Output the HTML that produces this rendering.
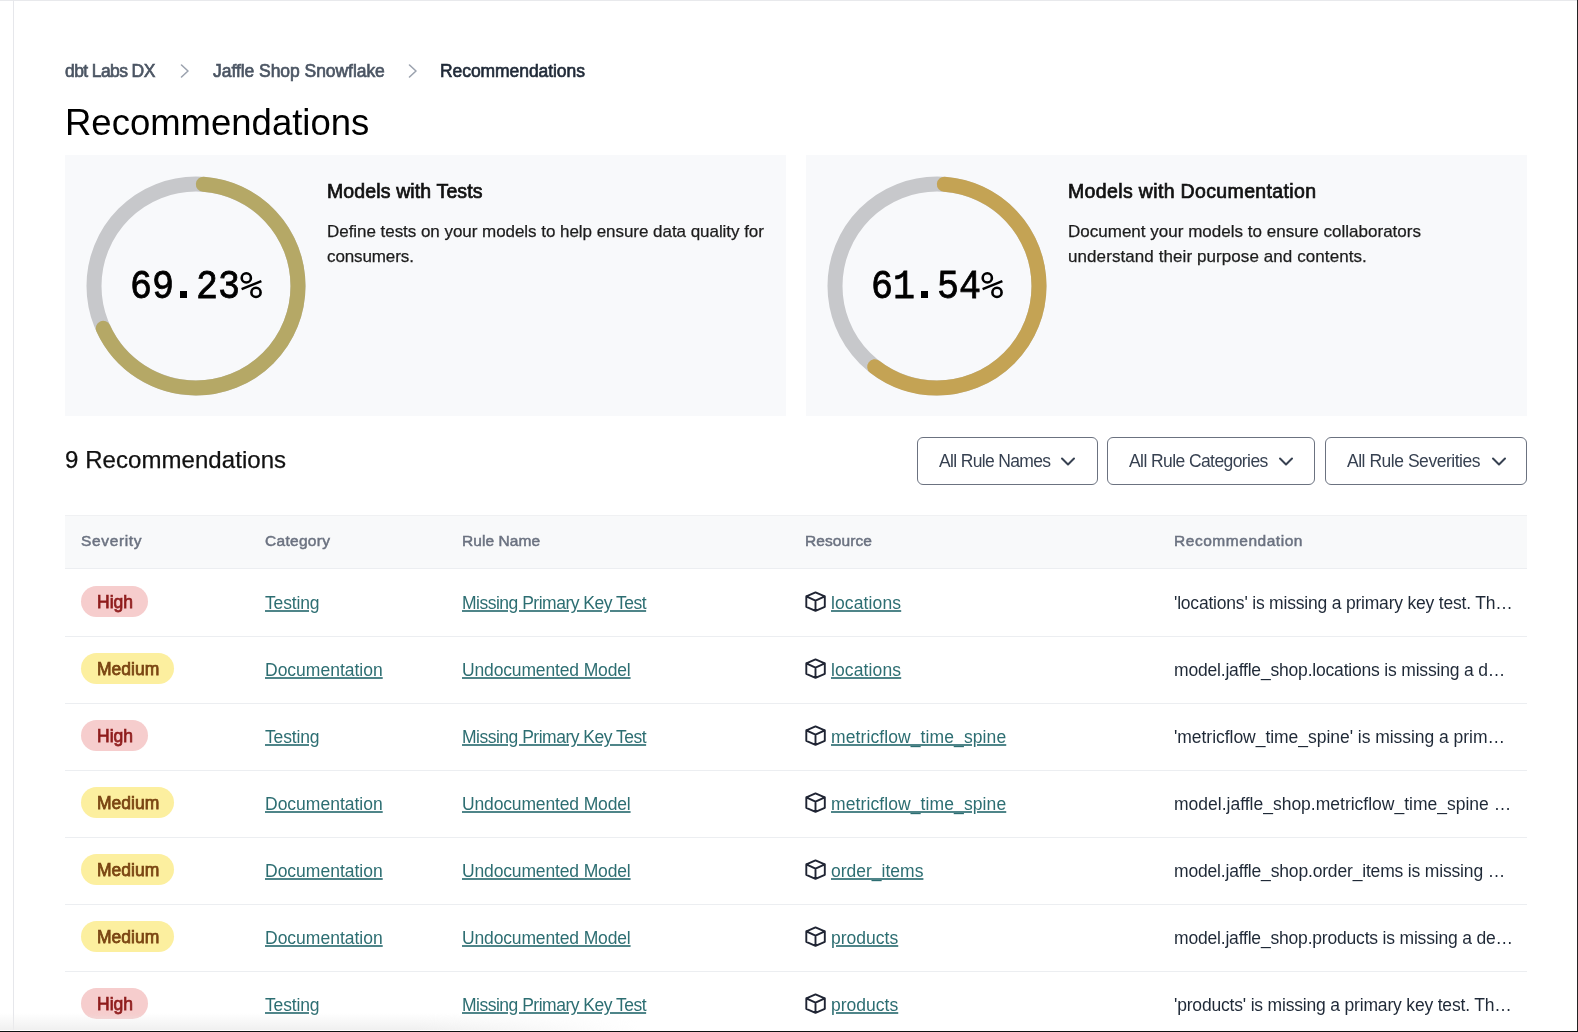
<!DOCTYPE html>
<html><head><meta charset="utf-8">
<style>
html,body{margin:0;padding:0;}
body{width:1578px;height:1032px;position:relative;overflow:hidden;background:#fff;font-family:"Liberation Sans",sans-serif;}
.a{position:absolute;white-space:nowrap;line-height:1;will-change:transform;}
.card{position:absolute;top:155px;width:721px;height:261px;background:#f8f9fb;}
.btn{position:absolute;top:437px;height:48px;box-sizing:border-box;border:1px solid #6b7280;border-radius:6px;background:#fff;}
.badge{position:absolute;height:31px;border-radius:16px;}
.lnk{text-decoration:underline;text-decoration-color:#4f8589;text-decoration-thickness:1.5px;text-underline-offset:1px;}
</style></head><body>
<div style="position:absolute;left:0;top:0;width:1578px;height:1px;background:#e8e9ec"></div>
<div style="position:absolute;left:13px;top:0;width:1px;height:1032px;background:#e6e7eb"></div>
<div class="a" style="left:65px;top:63px;font-size:17.5px;letter-spacing:-0.6px;color:#4b5563;-webkit-text-stroke:0.65px #4b5563;">dbt Labs DX</div>
<svg class="a" style="left:179px;top:63px" width="12" height="16" viewBox="0 0 12 16"><path d="M2.5 2 L9 8 L2.5 14" fill="none" stroke="#9ca3af" stroke-width="1.6" stroke-linecap="round" stroke-linejoin="round"/></svg>
<div class="a" style="left:213px;top:63px;font-size:17.5px;letter-spacing:-0.05px;color:#4b5563;-webkit-text-stroke:0.65px #4b5563;">Jaffle Shop Snowflake</div>
<svg class="a" style="left:407px;top:63px" width="12" height="16" viewBox="0 0 12 16"><path d="M2.5 2 L9 8 L2.5 14" fill="none" stroke="#9ca3af" stroke-width="1.6" stroke-linecap="round" stroke-linejoin="round"/></svg>
<div class="a" style="left:440px;top:63px;font-size:17.5px;letter-spacing:-0.071px;color:#1f2937;-webkit-text-stroke:0.65px #1f2937;">Recommendations</div>
<div class="a" style="left:64.5px;top:105px;font-size:36.5px;color:#000;">Recommendations</div>
<div class="card" style="left:65px"></div>
<div class="card" style="left:806px"></div>
<svg class="a" style="left:86px;top:176px" width="220" height="220" viewBox="0 0 220 220"><circle cx="110" cy="110" r="102" fill="none" stroke="#c7c8cb" stroke-width="15"/><circle cx="110" cy="110" r="102" fill="none" stroke="#b5a866" stroke-width="15" stroke-linecap="round" stroke-dasharray="428.68 2000" stroke-dashoffset="-7.5" transform="rotate(-90 110 110)"/></svg>
<svg class="a" style="left:827px;top:176px" width="220" height="220" viewBox="0 0 220 220"><circle cx="110" cy="110" r="102" fill="none" stroke="#c7c8cb" stroke-width="15"/><circle cx="110" cy="110" r="102" fill="none" stroke="#c4a354" stroke-width="15" stroke-linecap="round" stroke-dasharray="379.40 2000" stroke-dashoffset="-7.5" transform="rotate(-90 110 110)"/></svg>
<div class="a" style="left:129.7px;top:270px;font-size:36.7px;font-family:'Liberation Mono',monospace;transform:scaleY(1.12);transform-origin:0 80%;-webkit-text-stroke:0.7px #000;color:#000">69 23</div><svg class="a" style="left:238.00px;top:270px" width="28" height="30" viewBox="0 0 28 30"><circle cx="8.3" cy="7.9" r="4.6" fill="none" stroke="#000" stroke-width="2.6"/><circle cx="18" cy="22.4" r="4.6" fill="none" stroke="#000" stroke-width="2.6"/><path d="M3.6 19.2 L23.4 11.1" stroke="#000" stroke-width="2.5" stroke-linecap="butt"/></svg><div class="a" style="left:180.20px;top:290.8px;width:7.3px;height:7px;background:#000"></div>
<div class="a" style="left:870.7px;top:270px;font-size:36.7px;font-family:'Liberation Mono',monospace;transform:scaleY(1.12);transform-origin:0 80%;-webkit-text-stroke:0.7px #000;color:#000">61 54</div><svg class="a" style="left:979.00px;top:270px" width="28" height="30" viewBox="0 0 28 30"><circle cx="8.3" cy="7.9" r="4.6" fill="none" stroke="#000" stroke-width="2.6"/><circle cx="18" cy="22.4" r="4.6" fill="none" stroke="#000" stroke-width="2.6"/><path d="M3.6 19.2 L23.4 11.1" stroke="#000" stroke-width="2.5" stroke-linecap="butt"/></svg><div class="a" style="left:921.20px;top:290.8px;width:7.3px;height:7px;background:#000"></div>
<div class="a" style="left:326.5px;top:182px;font-size:19.5px;letter-spacing:0.125px;color:#111;-webkit-text-stroke:0.7px #111;">Models with Tests</div>
<div class="a" style="left:1067.5px;top:182px;font-size:19.5px;letter-spacing:0.354px;color:#111;-webkit-text-stroke:0.7px #111;">Models with Documentation</div>
<div class="a" style="left:326.5px;top:223px;font-size:17px;letter-spacing:-0.043px;color:#1c1c1c;-webkit-text-stroke:0.25px #1c1c1c;">Define tests on your models to help ensure data quality for</div>
<div class="a" style="left:326.5px;top:248px;font-size:17px;letter-spacing:-0.111px;color:#1c1c1c;-webkit-text-stroke:0.25px #1c1c1c;">consumers.</div>
<div class="a" style="left:1067.5px;top:223px;font-size:17px;letter-spacing:0.012px;color:#1c1c1c;-webkit-text-stroke:0.25px #1c1c1c;">Document your models to ensure collaborators</div>
<div class="a" style="left:1067.5px;top:248px;font-size:17px;letter-spacing:0.081px;color:#1c1c1c;-webkit-text-stroke:0.25px #1c1c1c;">understand their purpose and contents.</div>
<div class="a" style="left:65px;top:448px;font-size:24px;letter-spacing:0.062px;color:#111;-webkit-text-stroke:0.25px #111;">9 Recommendations</div>
<div class="btn" style="left:917px;width:181px"></div>
<div class="a" style="left:938.5px;top:453px;font-size:17.5px;letter-spacing:-0.654px;color:#374151;">All Rule Names</div>
<svg class="a" style="left:1059.5px;top:456px" width="16" height="12" viewBox="0 0 16 12"><path d="M2 2.5 L8 8.5 L14 2.5" fill="none" stroke="#374151" stroke-width="2" stroke-linecap="round" stroke-linejoin="round"/></svg>
<div class="btn" style="left:1107px;width:208px"></div>
<div class="a" style="left:1129px;top:453px;font-size:17.5px;letter-spacing:-0.583px;color:#374151;">All Rule Categories</div>
<svg class="a" style="left:1278px;top:456px" width="16" height="12" viewBox="0 0 16 12"><path d="M2 2.5 L8 8.5 L14 2.5" fill="none" stroke="#374151" stroke-width="2" stroke-linecap="round" stroke-linejoin="round"/></svg>
<div class="btn" style="left:1325px;width:202px"></div>
<div class="a" style="left:1347px;top:453px;font-size:17.5px;letter-spacing:-0.472px;color:#374151;">All Rule Severities</div>
<svg class="a" style="left:1490.5px;top:456px" width="16" height="12" viewBox="0 0 16 12"><path d="M2 2.5 L8 8.5 L14 2.5" fill="none" stroke="#374151" stroke-width="2" stroke-linecap="round" stroke-linejoin="round"/></svg>
<div style="position:absolute;left:65px;top:515px;width:1462px;height:54px;box-sizing:border-box;background:#f8f9fa;border-top:1px solid #f0f1f3;border-bottom:1px solid #eceef1"></div>
<div class="a" style="left:80.5px;top:533px;font-size:15.5px;letter-spacing:0.643px;color:#6b7280;-webkit-text-stroke:0.5px #6b7280;">Severity</div>
<div class="a" style="left:264.5px;top:533px;font-size:15.5px;letter-spacing:0.286px;color:#6b7280;-webkit-text-stroke:0.5px #6b7280;">Category</div>
<div class="a" style="left:462px;top:533px;font-size:15.5px;letter-spacing:0.062px;color:#6b7280;-webkit-text-stroke:0.5px #6b7280;">Rule Name</div>
<div class="a" style="left:805px;top:533px;font-size:15.5px;letter-spacing:0.071px;color:#6b7280;-webkit-text-stroke:0.5px #6b7280;">Resource</div>
<div class="a" style="left:1174px;top:533px;font-size:15.5px;letter-spacing:0.538px;color:#6b7280;-webkit-text-stroke:0.5px #6b7280;">Recommendation</div>
<div class="badge" style="left:81px;top:586px;width:67px;background:#f6cdcd"></div>
<div class="a" style="left:96.5px;top:594px;font-size:17.5px;color:#8f1d1d;-webkit-text-stroke:0.75px #8f1d1d;">High</div>
<div class="a lnk" style="left:265px;top:595px;font-size:17.5px;letter-spacing:-0.15px;color:#2d6e72;">Testing</div>
<div class="a lnk" style="left:461.5px;top:595px;font-size:17.5px;letter-spacing:-0.5px;color:#2d6e72;">Missing Primary Key Test</div>
<svg class="a" style="left:805px;top:591px" width="22" height="22" viewBox="0 0 22 22"><path d="M10.5 1.4 L19.8 5.3 L19.8 15.8 L10.5 19.8 L1.3 15.8 L1.3 5.3 Z M1.3 5.3 L10.5 9.6 L19.8 5.3 M10.5 9.6 L10.5 19.8" fill="none" stroke="#1f2433" stroke-width="1.9" stroke-linejoin="round" stroke-linecap="round"/></svg>
<div class="a lnk" style="left:831px;top:595px;font-size:17.5px;letter-spacing:0.125px;color:#2d6e72;">locations</div>
<div class="a" style="left:1174px;top:595px;font-size:17.5px;letter-spacing:-0.2px;color:#1f2937;">'locations' is missing a primary key test. Th…</div>
<div style="position:absolute;left:65px;top:636px;width:1462px;height:1px;background:#eceef1"></div>
<div class="badge" style="left:81px;top:653px;width:93px;background:#fcef9f"></div>
<div class="a" style="left:96.5px;top:661px;font-size:17.5px;color:#7a4512;-webkit-text-stroke:0.75px #7a4512;">Medium</div>
<div class="a lnk" style="left:265px;top:662px;font-size:17.5px;color:#2d6e72;">Documentation</div>
<div class="a lnk" style="left:461.5px;top:662px;font-size:17.5px;letter-spacing:-0.147px;color:#2d6e72;">Undocumented Model</div>
<svg class="a" style="left:805px;top:658px" width="22" height="22" viewBox="0 0 22 22"><path d="M10.5 1.4 L19.8 5.3 L19.8 15.8 L10.5 19.8 L1.3 15.8 L1.3 5.3 Z M1.3 5.3 L10.5 9.6 L19.8 5.3 M10.5 9.6 L10.5 19.8" fill="none" stroke="#1f2433" stroke-width="1.9" stroke-linejoin="round" stroke-linecap="round"/></svg>
<div class="a lnk" style="left:831px;top:662px;font-size:17.5px;letter-spacing:0.125px;color:#2d6e72;">locations</div>
<div class="a" style="left:1174px;top:662px;font-size:17.5px;letter-spacing:-0.19px;color:#1f2937;">model.jaffle_shop.locations is missing a d…</div>
<div style="position:absolute;left:65px;top:703px;width:1462px;height:1px;background:#eceef1"></div>
<div class="badge" style="left:81px;top:720px;width:67px;background:#f6cdcd"></div>
<div class="a" style="left:96.5px;top:728px;font-size:17.5px;color:#8f1d1d;-webkit-text-stroke:0.75px #8f1d1d;">High</div>
<div class="a lnk" style="left:265px;top:729px;font-size:17.5px;letter-spacing:-0.15px;color:#2d6e72;">Testing</div>
<div class="a lnk" style="left:461.5px;top:729px;font-size:17.5px;letter-spacing:-0.5px;color:#2d6e72;">Missing Primary Key Test</div>
<svg class="a" style="left:805px;top:725px" width="22" height="22" viewBox="0 0 22 22"><path d="M10.5 1.4 L19.8 5.3 L19.8 15.8 L10.5 19.8 L1.3 15.8 L1.3 5.3 Z M1.3 5.3 L10.5 9.6 L19.8 5.3 M10.5 9.6 L10.5 19.8" fill="none" stroke="#1f2433" stroke-width="1.9" stroke-linejoin="round" stroke-linecap="round"/></svg>
<div class="a lnk" style="left:831px;top:729px;font-size:17.5px;letter-spacing:0.1px;color:#2d6e72;">metricflow_time_spine</div>
<div class="a" style="left:1174px;top:729px;font-size:17.5px;letter-spacing:-0.037px;color:#1f2937;">'metricflow_time_spine' is missing a prim…</div>
<div style="position:absolute;left:65px;top:770px;width:1462px;height:1px;background:#eceef1"></div>
<div class="badge" style="left:81px;top:787px;width:93px;background:#fcef9f"></div>
<div class="a" style="left:96.5px;top:795px;font-size:17.5px;color:#7a4512;-webkit-text-stroke:0.75px #7a4512;">Medium</div>
<div class="a lnk" style="left:265px;top:796px;font-size:17.5px;color:#2d6e72;">Documentation</div>
<div class="a lnk" style="left:461.5px;top:796px;font-size:17.5px;letter-spacing:-0.147px;color:#2d6e72;">Undocumented Model</div>
<svg class="a" style="left:805px;top:792px" width="22" height="22" viewBox="0 0 22 22"><path d="M10.5 1.4 L19.8 5.3 L19.8 15.8 L10.5 19.8 L1.3 15.8 L1.3 5.3 Z M1.3 5.3 L10.5 9.6 L19.8 5.3 M10.5 9.6 L10.5 19.8" fill="none" stroke="#1f2433" stroke-width="1.9" stroke-linejoin="round" stroke-linecap="round"/></svg>
<div class="a lnk" style="left:831px;top:796px;font-size:17.5px;letter-spacing:0.1px;color:#2d6e72;">metricflow_time_spine</div>
<div class="a" style="left:1174px;top:796px;font-size:17.5px;color:#1f2937;">model.jaffle_shop.metricflow_time_spine …</div>
<div style="position:absolute;left:65px;top:837px;width:1462px;height:1px;background:#eceef1"></div>
<div class="badge" style="left:81px;top:854px;width:93px;background:#fcef9f"></div>
<div class="a" style="left:96.5px;top:862px;font-size:17.5px;color:#7a4512;-webkit-text-stroke:0.75px #7a4512;">Medium</div>
<div class="a lnk" style="left:265px;top:863px;font-size:17.5px;color:#2d6e72;">Documentation</div>
<div class="a lnk" style="left:461.5px;top:863px;font-size:17.5px;letter-spacing:-0.147px;color:#2d6e72;">Undocumented Model</div>
<svg class="a" style="left:805px;top:859px" width="22" height="22" viewBox="0 0 22 22"><path d="M10.5 1.4 L19.8 5.3 L19.8 15.8 L10.5 19.8 L1.3 15.8 L1.3 5.3 Z M1.3 5.3 L10.5 9.6 L19.8 5.3 M10.5 9.6 L10.5 19.8" fill="none" stroke="#1f2433" stroke-width="1.9" stroke-linejoin="round" stroke-linecap="round"/></svg>
<div class="a lnk" style="left:831px;top:863px;font-size:17.5px;color:#2d6e72;">order_items</div>
<div class="a" style="left:1174px;top:863px;font-size:17.5px;letter-spacing:-0.171px;color:#1f2937;">model.jaffle_shop.order_items is missing …</div>
<div style="position:absolute;left:65px;top:904px;width:1462px;height:1px;background:#eceef1"></div>
<div class="badge" style="left:81px;top:921px;width:93px;background:#fcef9f"></div>
<div class="a" style="left:96.5px;top:929px;font-size:17.5px;color:#7a4512;-webkit-text-stroke:0.75px #7a4512;">Medium</div>
<div class="a lnk" style="left:265px;top:930px;font-size:17.5px;color:#2d6e72;">Documentation</div>
<div class="a lnk" style="left:461.5px;top:930px;font-size:17.5px;letter-spacing:-0.147px;color:#2d6e72;">Undocumented Model</div>
<svg class="a" style="left:805px;top:926px" width="22" height="22" viewBox="0 0 22 22"><path d="M10.5 1.4 L19.8 5.3 L19.8 15.8 L10.5 19.8 L1.3 15.8 L1.3 5.3 Z M1.3 5.3 L10.5 9.6 L19.8 5.3 M10.5 9.6 L10.5 19.8" fill="none" stroke="#1f2433" stroke-width="1.9" stroke-linejoin="round" stroke-linecap="round"/></svg>
<div class="a lnk" style="left:831px;top:930px;font-size:17.5px;letter-spacing:0.014px;color:#2d6e72;">products</div>
<div class="a" style="left:1174px;top:930px;font-size:17.5px;letter-spacing:-0.19px;color:#1f2937;">model.jaffle_shop.products is missing a de…</div>
<div style="position:absolute;left:65px;top:971px;width:1462px;height:1px;background:#eceef1"></div>
<div class="badge" style="left:81px;top:988px;width:67px;background:#f6cdcd"></div>
<div class="a" style="left:96.5px;top:996px;font-size:17.5px;color:#8f1d1d;-webkit-text-stroke:0.75px #8f1d1d;">High</div>
<div class="a lnk" style="left:265px;top:997px;font-size:17.5px;letter-spacing:-0.15px;color:#2d6e72;">Testing</div>
<div class="a lnk" style="left:461.5px;top:997px;font-size:17.5px;letter-spacing:-0.5px;color:#2d6e72;">Missing Primary Key Test</div>
<svg class="a" style="left:805px;top:993px" width="22" height="22" viewBox="0 0 22 22"><path d="M10.5 1.4 L19.8 5.3 L19.8 15.8 L10.5 19.8 L1.3 15.8 L1.3 5.3 Z M1.3 5.3 L10.5 9.6 L19.8 5.3 M10.5 9.6 L10.5 19.8" fill="none" stroke="#1f2433" stroke-width="1.9" stroke-linejoin="round" stroke-linecap="round"/></svg>
<div class="a lnk" style="left:831px;top:997px;font-size:17.5px;letter-spacing:0.014px;color:#2d6e72;">products</div>
<div class="a" style="left:1174px;top:997px;font-size:17.5px;letter-spacing:-0.182px;color:#1f2937;">'products' is missing a primary key test. Th…</div>
<div style="position:absolute;left:0;top:1013px;width:640px;height:17px;background:linear-gradient(to bottom,rgba(236,236,236,0),rgba(236,236,236,0.8));-webkit-mask-image:linear-gradient(to right,#000 0%,#000 65%,transparent 100%)"></div>
<div style="position:absolute;left:0;top:1030px;width:1577px;height:1px;background:#fff"></div>
<div style="position:absolute;left:1577px;top:0;width:1px;height:1032px;background:#232323"></div>
<div style="position:absolute;left:0;top:1031px;width:1578px;height:1px;background:#0d1212"></div>
</body></html>
